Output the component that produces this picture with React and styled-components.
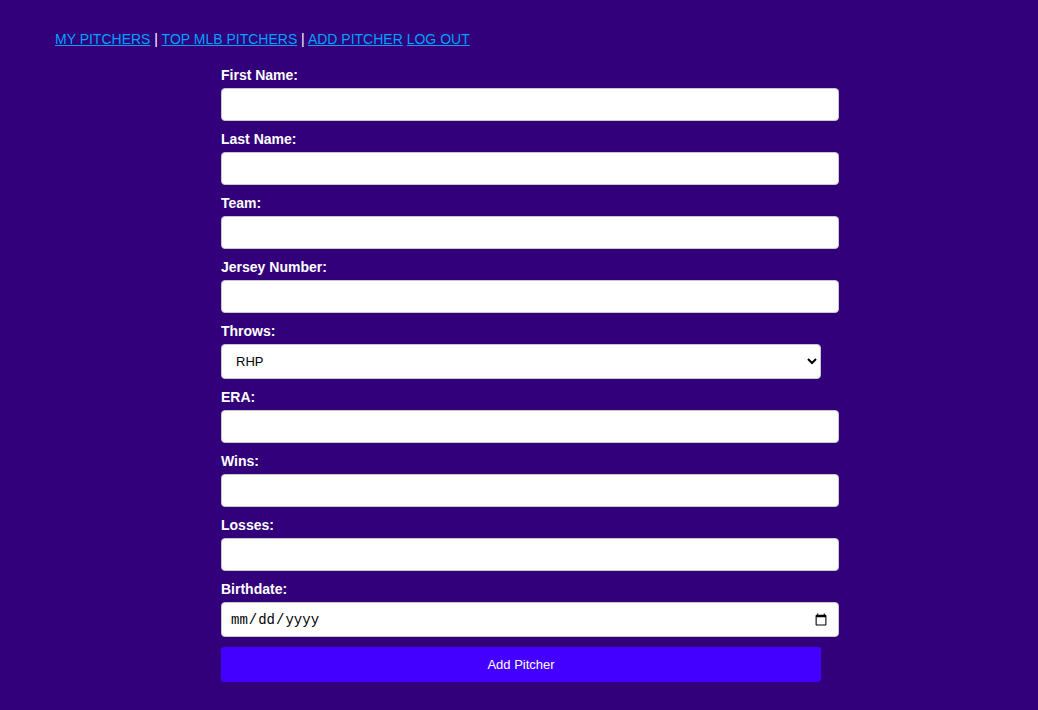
import React from "react";
import styled, { createGlobalStyle } from "styled-components";

const GlobalStyle = createGlobalStyle`
  html, body {
    margin: 0;
    background: #32007a;
    font-family: "Liberation Sans", Arial, sans-serif;
  }
`;

const Page = styled.div`
  min-height: 710px;
  background: #32007a;
  padding-top: 31px;
  box-sizing: border-box;
`;

const Nav = styled.nav`
  padding: 0 55px;
  font-size: 14px;
  line-height: 16px;
  color: #ffffff;
`;

const NavLink = styled.a`
  color: #00a2ff;
  text-decoration: underline;
`;

const Form = styled.form`
  width: 600px;
  margin: 19px 0 0 221px;
  display: flex;
  flex-direction: column;
`;

const Label = styled.label`
  display: block;
  font-size: 14px;
  font-weight: bold;
  line-height: 18px;
  color: #ffffff;
  margin-bottom: 4px;
`;

const Input = styled.input`
  width: 100%;
  padding: 0 8px;
  box-sizing: content-box;
  height: 31px;
  border: 1px solid #c8c8c8;
  border-radius: 4px;
  background: #ffffff;
  font-family: ${p => (p.type === "date" ? '"Liberation Mono", monospace' : '"Liberation Sans", Arial, sans-serif')};
  font-size: ${p => (p.type === "date" ? "14px" : "13px")};
  margin-bottom: 9px;
  outline: none;
  ${p => p.type === "date" && "height: 33px; margin-bottom: 10px;"}
`;

const Select = styled.select`
  width: 600px;
  height: 35px;
  padding: 0 10px;
  border: 1px solid #c8c8c8;
  border-radius: 4px;
  background: #ffffff;
  font-family: "Liberation Sans", Arial, sans-serif;
  font-size: 13px;
  color: #000;
  margin-bottom: 9px;
`;

const Button = styled.button`
  width: 600px;
  height: 35px;
  border: none;
  border-radius: 3px;
  background: #4400ff;
  color: #ffffff;
  font-family: "Liberation Sans", Arial, sans-serif;
  font-size: 13px;
`;

const fields = [
  ["First Name:", "text"],
  ["Last Name:", "text"],
  ["Team:", "text"],
  ["Jersey Number:", "text"],
];

const statFields = [
  ["ERA:", "text"],
  ["Wins:", "text"],
  ["Losses:", "text"],
  ["Birthdate:", "date"],
];

const Field = ({ label, type }) => (
  <div>
    <Label>{label}</Label>
    <Input type={type} />
  </div>
);

const App = () => (
  <Page>
    <GlobalStyle />
    <Nav>
      <NavLink href="#">MY PITCHERS</NavLink> | <NavLink href="#">TOP MLB PITCHERS</NavLink> |{" "}
      <NavLink href="#">ADD PITCHER</NavLink> <NavLink href="#">LOG OUT</NavLink>
    </Nav>
    <Form onSubmit={e => e.preventDefault()}>
      {fields.map(([l, t]) => (
        <Field key={l} label={l} type={t} />
      ))}
      <div>
        <Label>Throws:</Label>
        <Select defaultValue="RHP">
          <option>RHP</option>
          <option>LHP</option>
        </Select>
      </div>
      {statFields.map(([l, t]) => (
        <Field key={l} label={l} type={t} />
      ))}
      <Button type="submit">Add Pitcher</Button>
    </Form>
  </Page>
);

export default App;
